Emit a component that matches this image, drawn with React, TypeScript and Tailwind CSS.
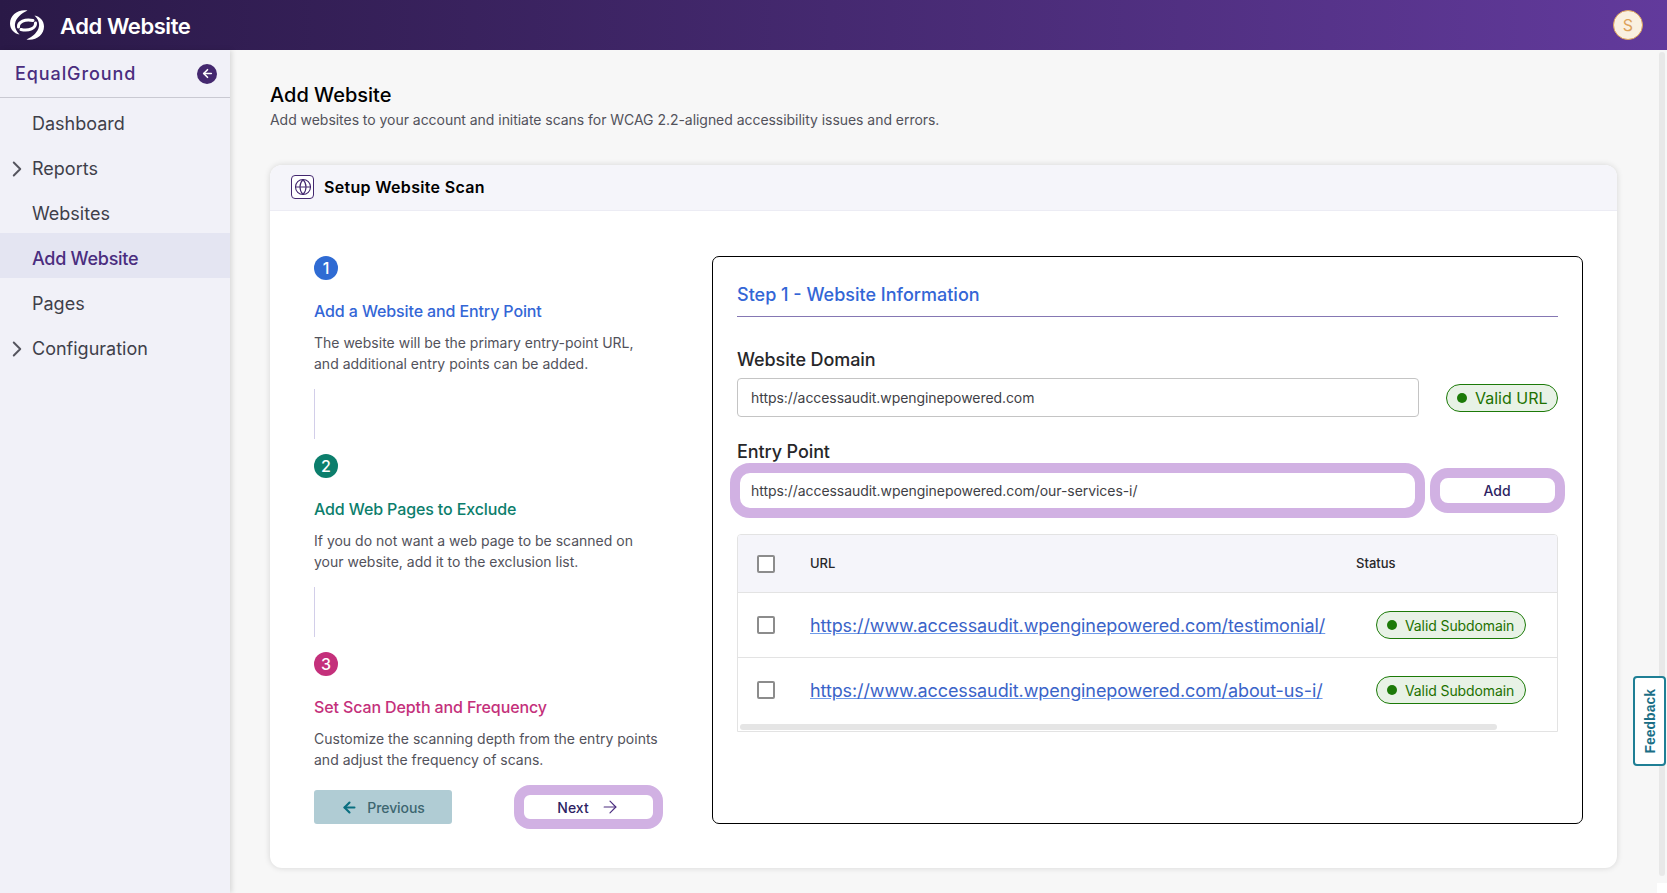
import { ArrowLeft, ArrowRight, ChevronRight, Globe } from "lucide-react";

function Logo() {
  const crescent = "M27.5 10.5 C 18 9, 10 15, 10 23.5 C 10 29, 14 33.5, 19.5 34.5 C 16 31, 14.5 27.5, 15 24 C 15.8 18, 21 13.5, 27.5 10.5 Z";
  const inner = "M18.5 27 C 18 22, 25 18.5, 33 20.5";
  return (
    <svg width="34" height="30" viewBox="10 10 34 30" className="shrink-0">
      <path d={crescent} fill="#fff" />
      <path d={inner} fill="none" stroke="#fff" strokeWidth="3" strokeLinecap="round" />
      <g transform="rotate(180 27 25)">
        <path d={crescent} fill="#fff" />
        <path d={inner} fill="none" stroke="#fff" strokeWidth="3" strokeLinecap="round" />
      </g>
    </svg>
  );
}

function NavItem({ label, chevron, active }: { label: string; chevron?: boolean; active?: boolean }) {
  return (
    <div
      className={
        active
          ? "relative h-[45px] pt-[6px] flex items-center pl-[32px] bg-[#e4e5f2] text-[#4a2d7f] font-medium text-[18px] tracking-[-0.015em]"
          : "relative h-[45px] pt-[6px] flex items-center pl-[32px] text-[#3f3f4a] text-[18px]"
      }
    >
      {chevron && <ChevronRight size={26} strokeWidth={1.8} className="absolute left-[4px] top-[13px] text-[#55555f]" />}
      {label}
    </div>
  );
}

function Step({ n, title, color, text }: { n: number; title: string; color: string; text: string[] }) {
  const palette: Record<string, [string, string]> = {
    blue: ["bg-[#2f6bd3]", "text-[#3366d6]"],
    green: ["bg-[#0c7e6c]", "text-[#0c7e6c]"],
    pink: ["bg-[#c4307b]", "text-[#c4307b]"],
  };
  const [bg, fg] = palette[color];
  return (
    <div>
      <div className={`${bg} w-[24px] h-[24px] rounded-full flex items-center justify-center text-white text-[16px] font-medium`}>{n}</div>
      <div className={`${fg} mt-[19px] h-[24px] leading-[24px] text-[16px] font-medium tracking-[-0.12px]`}>{title}</div>
      <div className="mt-[9px] text-[14px] leading-[21px] text-[#52525b] whitespace-nowrap">
        {text.map((t) => (
          <div key={t}>{t}</div>
        ))}
      </div>
    </div>
  );
}

function Connector() {
  return <div className="w-px h-[50px] my-[15px] bg-[#d2cee9]" />;
}

function Badge({ label, big }: { label: string; big?: boolean }) {
  return (
    <div
      className={
        big
          ? "h-[28px] w-[112px] rounded-full border border-[#1c7a08] bg-[#e8f2e6] text-[#1d7100] text-[16px] flex items-center pl-[10px] gap-[8px]"
          : "h-[28px] w-[150px] rounded-full border border-[#1c7a08] bg-[#e8f2e6] text-[#1d7100] text-[14px] tracking-[-0.1px] flex items-center pl-[10px] gap-[8px]"
      }
    >
      <span className="w-[10px] h-[10px] rounded-full bg-[#1c7a08] shrink-0" />
      {label}
    </div>
  );
}

function Check() {
  return <span className="block w-[18px] h-[18px] border-2 border-[#8c8c8c] rounded-[2px] bg-white" />;
}

function Row({ href }: { href: string }) {
  return (
    <div className="h-[65px] flex items-center border-t border-[#e3e3e3]">
      <div className="w-[72px] pl-[19px]">
        <Check />
      </div>
      <a className="w-[566px] text-[18px] tracking-[-0.1px] text-[#3a63c8] underline decoration-[#6f9bea]">{href}</a>
      <Badge label="Valid Subdomain" />
    </div>
  );
}

export default function App() {
  return (
    <div className="relative w-[1667px] h-[893px] overflow-hidden flex flex-col bg-[#f7f7f7] font-[Inter,sans-serif]">
      <header className="h-[50px] shrink-0 flex items-center pl-[10px] pr-[24px] bg-gradient-to-r from-[#2a1947] to-[#623a9c]">
        <Logo />
        <div className="ml-[16px] pt-[2px] text-white text-[22px] font-semibold tracking-[-0.02em] leading-[30px]">Add Website</div>
        <div className="ml-auto w-[30px] h-[30px] rounded-full border border-[#dda25a] bg-[#faf0e0] text-[#dda25a] text-[16px] flex items-center justify-center">S</div>
      </header>
      <div className="flex flex-1 min-h-0">
        <aside className="relative z-10 w-[230px] shrink-0 bg-[#f1f1f8] shadow-[2px_0_5px_rgba(0,0,0,0.12)]">
          <div className="h-[48px] flex items-center justify-between pl-[15px] pr-[13px] border-b border-[#c9c9d2]">
            <span className="text-[18px] font-medium tracking-[0.05em] text-[#4a2d7f]">EqualGround</span>
            <span className="w-[20px] h-[20px] rounded-full bg-[#44286f] flex items-center justify-center text-white">
              <ArrowLeft size={13} strokeWidth={3} />
            </span>
          </div>
          <NavItem label="Dashboard" />
          <NavItem label="Reports" chevron />
          <NavItem label="Websites" />
          <NavItem label="Add Website" active />
          <NavItem label="Pages" />
          <NavItem label="Configuration" chevron />
        </aside>
        <main className="flex-1 pl-[40px] pt-[31px]">
          <h1 className="text-[20px] leading-[28px] font-medium text-black">Add Website</h1>
          <p className="mt-[1px] text-[14px] leading-[20px] tracking-[-0.04px] text-[#52525b]">Add websites to your account and initiate scans for WCAG 2.2-aligned accessibility issues and errors.</p>
          <section className="mt-[35px] w-[1347px] h-[703px] bg-white rounded-[12px] shadow-[0_0_6px_rgba(0,0,0,0.14)] overflow-hidden">
            <div className="h-[46px] pb-[2px] bg-[#f5f5fa] border-b border-[#ececf4] flex items-center pl-[21px] gap-[10px]">
              <span className="w-[23px] h-[24px] rounded-[4px] border border-[#44286f] bg-white flex items-center justify-center text-[#44286f]">
                <Globe size={18} strokeWidth={1.5} />
              </span>
              <span className="text-[16px] font-semibold text-black tracking-[0.02em]">Setup Website Scan</span>
            </div>
            <div className="flex pl-[44px] pr-[34px] pt-[45px]">
              <div className="w-[349px]">
                <Step n={1} color="blue" title="Add a Website and Entry Point" text={["The website will be the primary entry-point URL,", "and additional entry points can be added."]} />
                <Connector />
                <Step n={2} color="green" title="Add Web Pages to Exclude" text={["If you do not want a web page to be scanned on", "your website, add it to the exclusion list."]} />
                <Connector />
                <Step n={3} color="pink" title="Set Scan Depth and Frequency" text={["Customize the scanning depth from the entry points", "and adjust the frequency of scans."]} />
                <div className="mt-[15px] flex items-center justify-between">
                  <button className="w-[138px] h-[34px] rounded-[3px] bg-[#b0ccd4] text-[#3d6670] text-[14px] tracking-[-0.1px] font-medium flex items-center justify-center gap-[9px]">
                    <ArrowLeft size={17} strokeWidth={3} className="text-[#0a6f80]" />
                    Previous
                  </button>
                  <button className="w-[149px] h-[44px] rounded-[16px] border-[10px] border-[#d1b1e3] bg-white text-[#2e1f63] text-[14px] font-medium flex items-center justify-center gap-[11px]">
                    Next
                    <ArrowRight size={20} strokeWidth={1.4} className="text-[#4a2d7f]" />
                  </button>
                </div>
              </div>
              <div className="ml-auto w-[871px] h-[568px] border border-black rounded-[7px] pl-[24px] pr-[24px] pt-[26px]">
                <div className="h-[24px] leading-[24px] text-[18px] font-medium text-[#3366d6]">Step 1 - Website Information</div>
                <div className="mt-[9px] h-px bg-[#8577b3]" />
                <div className="mt-[32px] h-[22px] leading-[22px] text-[18px] font-medium tracking-[-0.1px] text-[#27272a]">Website Domain</div>
                <div className="mt-[7px] flex items-center justify-between">
                  <input readOnly value="https://accessaudit.wpenginepowered.com" className="w-[682px] h-[39px] border border-[#c4c4c4] rounded-[4px] bg-white pl-[13px] text-[14px] tracking-[-0.07px] text-[#3f3f46] outline-none" />
                  <Badge label="Valid URL" big />
                </div>
                <div className="mt-[24px] h-[22px] leading-[22px] text-[18px] font-medium tracking-[-0.1px] text-[#27272a]">Entry Point</div>
                <div className="flex items-center gap-[5px] -mx-[7px]">
                  <input readOnly value="https://accessaudit.wpenginepowered.com/our-services-i/" className="w-[695px] h-[55px] border-[10px] border-[#d1b1e3] rounded-[20px] bg-white pl-[11px] text-[14px] tracking-[-0.06px] text-[#3f3f46] outline-none" />
                  <button className="w-[135px] h-[45px] pr-[1px] border-[10px] border-[#d1b1e3] rounded-[18px] bg-white text-[14px] font-medium text-[#2e1f63]">Add</button>
                </div>
                <div className="mt-[16px] h-[198px] border border-[#e3e3e3] rounded-t-[4px] relative overflow-hidden">
                  <div className="h-[57px] bg-[#f5f5fa] flex items-center text-[13px] font-medium text-[#27272a]">
                    <div className="w-[72px] pl-[19px]">
                      <Check />
                    </div>
                    <div className="w-[546px]">URL</div>
                    <div>Status</div>
                  </div>
                  <Row href="https://www.accessaudit.wpenginepowered.com/testimonial/" />
                  <Row href="https://www.accessaudit.wpenginepowered.com/about-us-i/" />
                  <div className="absolute left-[2px] bottom-[1px] w-[757px] h-[6px] rounded-full bg-[#e5e5e5]" />
                </div>
              </div>
            </div>
          </section>
        </main>
      </div>
      <div className="absolute right-[2px] top-[52px] w-[6px] h-[824px] rounded-full bg-[#e8e8e8]" />
      <div className="absolute right-0 bottom-0 w-[10px] h-[10px] bg-white" />
      <button className="absolute left-[1633px] top-[676px] w-[33px] h-[90px] pl-[2px] rounded-[4px] border-2 border-[#1f7f95] bg-white flex items-center justify-center">
        <span className="[writing-mode:vertical-rl] rotate-180 font-['Liberation_Sans',sans-serif] font-bold text-[14px] text-[#1a6e85]">Feedback</span>
      </button>
    </div>
  );
}
